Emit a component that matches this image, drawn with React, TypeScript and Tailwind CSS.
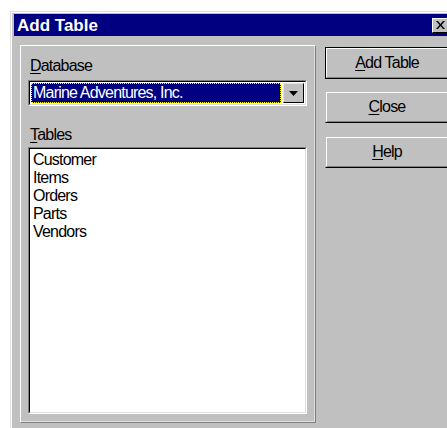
const items = ['Customer', 'Items', 'Orders', 'Parts', 'Vendors'];

const font = { fontFamily: '"Liberation Sans", Arial, sans-serif' };

function Btn({ label, hot, isDefault }: { label: string; hot: number; isDefault?: boolean }) {
  const text = (
    <span>
      {label.slice(0, hot)}
      <span className="underline underline-offset-2">{label[hot]}</span>
      {label.slice(hot + 1)}
    </span>
  );
  return (
    <div className={isDefault ? 'border border-black' : 'border border-transparent border-b-black border-r-black'}>
      <div className="border-t border-l border-white border-r border-b border-r-[#808080] border-b-[#808080] bg-[#c0c0c0] flex items-center justify-center text-[16px] tracking-[-0.8px] text-black h-[30px]">
        {text}
      </div>
    </div>
  );
}

export default function App() {
  return (
    <div className="w-[447px] h-[428px] bg-white overflow-hidden text-black" style={font}>
      <div className="ml-[10px] mt-[11px] w-[460px] h-[430px] border-t border-l border-[#dfdfdf] bg-[#c0c0c0]">
        <div className="h-full border-t border-l border-white pl-[2px] pt-[1px]">
          {/* title bar */}
          <div className="h-[22px] bg-[#000080] flex items-center pl-[3px]">
            <span className="text-white font-bold text-[17px] leading-none">Add Table</span>
            <div className="ml-auto mr-[21px] w-[17px] h-[15px] bg-[#c0c0c0] border-t border-l border-white border-r border-b border-r-black border-b-black flex items-center justify-center">
              <svg width="9" height="8" viewBox="0 0 9 8">
                <path d="M0 0h2l2.5 3 2.5-3h2L5.5 4 9 8H7L4.5 5 2 8H0l3.5-4z" fill="black" />
              </svg>
            </div>
          </div>

          <div className="flex pl-[6px] pt-[9px]">
            {/* group panel */}
            <div className="w-[296px] h-[378px] border-t border-l border-white border-r border-b border-r-[#808080] border-b-[#808080]">
              <div className="h-full border-r border-b border-r-[#dfdfdf] border-b-[#dfdfdf] pl-[7px] pt-[11px] text-[16px] tracking-[-0.8px]">
                <div className="pl-[2px] leading-[18px]">
                  <span className="underline underline-offset-2">D</span>atabase
                </div>
                {/* combo box */}
                <div className="mt-[5px] w-[279px] h-[26px] border-t border-l border-[#808080] border-r border-b border-r-white border-b-white">
                  <div className="h-full border-t border-l border-black border-r border-b border-r-[#dfdfdf] border-b-[#dfdfdf] flex bg-white">
                    <div className="flex-1 m-[1px] bg-[#000080] border border-dotted border-[#ffff00] flex items-center pl-[1px]">
                      <span className="text-white leading-none">Marine Adventures, Inc.</span>
                    </div>
                    <div className="w-[21px] m-[1px] bg-[#c0c0c0] border-t border-l border-[#dfdfdf] border-r border-b border-r-black border-b-black flex items-center justify-center">
                      <svg width="9" height="5" viewBox="0 0 9 5">
                        <path d="M0 0h9L4.5 5z" fill="black" />
                      </svg>
                    </div>
                  </div>
                </div>

                <div className="mt-[20px] pl-[2px] leading-[18px]">
                  <span className="underline underline-offset-2">T</span>ables
                </div>
                {/* table list */}
                <div className="mt-[3px] w-[279px] h-[267px] border-t border-l border-[#808080] border-r border-b border-r-white border-b-white">
                  <div className="h-full border-t border-l border-black border-r border-b border-r-[#dfdfdf] border-b-[#dfdfdf] bg-white pl-[3px] pt-[2px]">
                    {items.map((t) => (
                      <div key={t} className="leading-[18px]">
                        {t}
                      </div>
                    ))}
                  </div>
                </div>
              </div>
            </div>

            {/* buttons */}
            <div className="ml-[9px] mt-[2px] w-[124px] flex flex-col gap-[12px]">
              <Btn label="Add Table" hot={0} isDefault />
              <Btn label="Close" hot={0} />
              <div className="mt-[1px]">
                <Btn label="Help" hot={0} />
              </div>
            </div>
          </div>
        </div>
      </div>
    </div>
  );
}
